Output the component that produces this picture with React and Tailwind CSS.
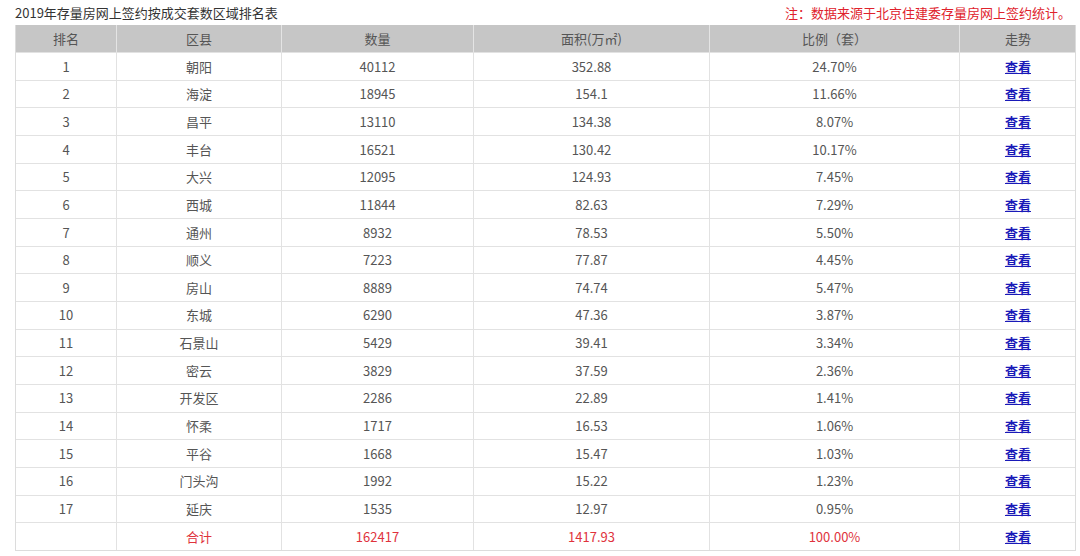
import React from "react";

const rows = [
  [1, "朝阳", "40112", "352.88", "24.70%"],
  [2, "海淀", "18945", "154.1", "11.66%"],
  [3, "昌平", "13110", "134.38", "8.07%"],
  [4, "丰台", "16521", "130.42", "10.17%"],
  [5, "大兴", "12095", "124.93", "7.45%"],
  [6, "西城", "11844", "82.63", "7.29%"],
  [7, "通州", "8932", "78.53", "5.50%"],
  [8, "顺义", "7223", "77.87", "4.45%"],
  [9, "房山", "8889", "74.74", "5.47%"],
  [10, "东城", "6290", "47.36", "3.87%"],
  [11, "石景山", "5429", "39.41", "3.34%"],
  [12, "密云", "3829", "37.59", "2.36%"],
  [13, "开发区", "2286", "22.89", "1.41%"],
  [14, "怀柔", "1717", "16.53", "1.06%"],
  [15, "平谷", "1668", "15.47", "1.03%"],
  [16, "门头沟", "1992", "15.22", "1.23%"],
  [17, "延庆", "1535", "12.97", "0.95%"],
];

const cols = "grid grid-cols-[101px_165px_192px_236px_250px_116px]";
const font = { fontFamily: '"Microsoft YaHei", "Noto Sans CJK SC", "Noto Sans", sans-serif' };

export default function App() {
  return (
    <div className="w-[1080px] h-[556px] bg-white text-[13px]" style={font}>
      <div className="flex justify-between items-center h-[25px] pl-[15px] pr-[9px]">
        <span className="text-[#333]">2019年存量房网上签约按成交套数区域排名表</span>
        <span className="text-[#e0222c]">注：数据来源于北京住建委存量房网上签约统计。</span>
      </div>
      <div className="ml-[15px] w-[1061px] border border-[#dcdcdc] border-t-0">
        <div className={`${cols} h-[27px] bg-[#c6c6c6] text-[#555]`}>
          {["排名", "区县", "数量", "面积(万㎡)", "比例（套）", "走势"].map((h, i) => (
            <div key={i} className={`flex items-center justify-center ${i < 5 ? "border-r border-[#e4e4e4]" : ""}`}>{h}</div>
          ))}
        </div>
        {rows.map((r) => (
          <div key={r[0]} className={`${cols} h-[27.67px] border-t border-[#e2e2e2] text-[#555]`}>
            {r.map((c, i) => (
              <div key={i} className="flex items-center justify-center border-r border-[#e2e2e2]">{c}</div>
            ))}
            <div className="flex items-center justify-center">
              <a href="#" className="text-[#1a1ab8] underline font-bold">查看</a>
            </div>
          </div>
        ))}
        <div className={`${cols} h-[27.67px] border-t border-[#e2e2e2] text-[#e0323c]`}>
          {["", "合计", "162417", "1417.93", "100.00%"].map((c, i) => (
            <div key={i} className="flex items-center justify-center border-r border-[#e2e2e2]">{c}</div>
          ))}
          <div className="flex items-center justify-center">
            <a href="#" className="text-[#1a1ab8] underline font-bold">查看</a>
          </div>
        </div>
      </div>
    </div>
  );
}
